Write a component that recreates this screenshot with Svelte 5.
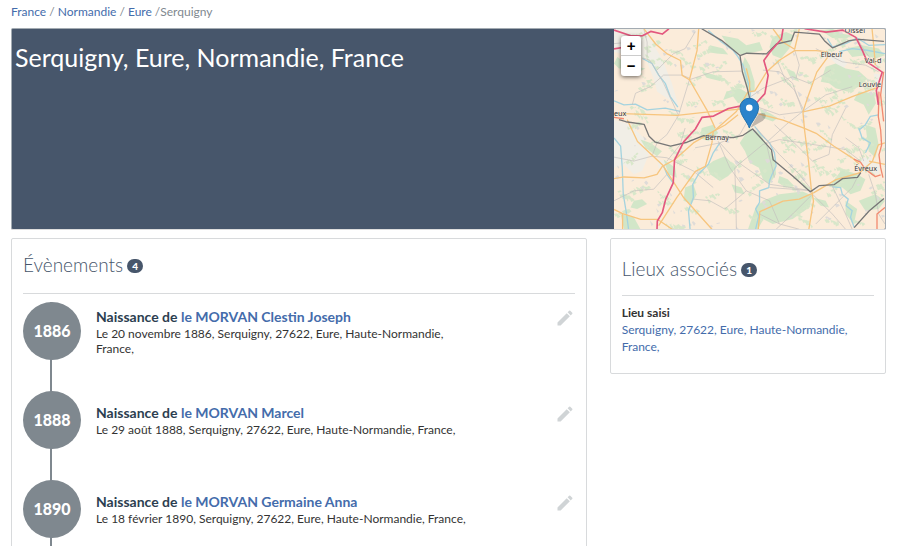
<script>
    const place = "Serquigny, 27622, Eure, Haute-Normandie, France,";

    const crumbs = ["France", "Normandie", "Eure"];

    const events = [
        { year: 1886, date: "Le 20 novembre 1886", person: "le MORVAN Clestin Joseph" },
        { year: 1888, date: "Le 29 août 1888", person: "le MORVAN Marcel" },
        { year: 1890, date: "Le 18 février 1890", person: "le MORVAN Germaine Anna" },
    ];

    // Map layers, drawn from bottom to top
    const forests = [
        "M410 300 438 312 462 350 486 395 490 440 470 470 450 455 438 420 410 405 396 370 380 345Z",
        "M640 115 670 105 700 120 740 128 765 150 740 175 705 190 670 180 650 165 625 160Z",
        "M450 520 500 500 570 492 600 505 590 540 540 575 480 590 440 570Z",
        "M480 25 520 10 545 20 530 60 505 90 480 80 470 55Z",
        "M325 20 375 30 400 50 440 40 450 65 420 72 385 78 350 60Z",
        "M300 400 335 385 350 400 370 420 345 445 320 460 290 440 280 415Z",
        "M690 425 735 440 760 455 745 490 715 500 690 480 650 478 670 450Z",
        "M395 85 410 110 425 160 425 190 408 195 395 150 388 110Z",
        "M740 190 785 195 792 225 770 260 755 230 725 215Z",
        "M10 85 30 100 55 98 70 115 95 120 80 128 45 118 15 120 0 105Z",
        "M700 60 750 50 800 60 819 80 790 90 760 80 720 85Z",
        "M625 5 660 0 690 15 720 20 700 30 660 28Z",
        "M380 180 405 195 405 215 375 225 360 205 330 215 340 190Z",
        "M440 240 470 255 495 270 480 280 450 270Z",
        "M760 290 790 300 800 350 790 390 770 370 765 330Z",
        "M500 445 525 455 545 475 520 480 495 465Z",
        "M60 520 85 515 100 530 70 545 50 540Z",
        "M290 50 330 60 345 78 310 75 280 70Z",
        "M265 130 300 138 335 150 320 158 280 148Z",
        "M215 480 240 470 250 500 235 530 210 520Z",
        "M430 535 455 520 460 560 435 606 405 606Z",
        "M600 510 640 520 650 540 625 535Z",
        "M700 520 735 545 725 590 700 560Z",
        "M80 335 110 345 145 370 130 385 95 360Z",
        "M150 395 185 420 190 450 165 440Z",
        "M520 120 545 130 560 160 535 150Z",
        "M20 560 60 570 80 606 30 606Z",
        "M355 470 385 480 395 500 365 495Z",
        "M265 300 300 290 315 315 285 340 260 330Z",
        "M740 520 790 500 819 520 800 545 760 550Z",
    ];

    const towns = [
        "M0 0H105L120 50 145 90 175 165 195 235 175 220 130 190 120 150 95 90 0 70Z",
        "M0 275 50 290 90 330 105 380 85 430 60 440 30 410 0 420Z",
        "M295 305 315 300 325 325 310 340 290 325Z",
        "M745 392 775 388 805 410 800 440 750 430Z",
        "M650 85 680 78 705 105 690 125 670 105Z",
        "M785 135 819 140 819 200 795 180Z",
        "M565 235 590 240 585 262 562 258Z",
        "M590 480 612 485 608 502 588 498Z",
        "M405 180 430 185 428 215 405 212Z",
        "M130 395 155 400 158 425 135 420Z",
    ];

    const rivers = [
        "M86 90 115 105 135 140 155 165 170 205 193 237",
        "M0 218 30 230 65 228 100 245 155 240 200 250",
        "M0 330 20 355 25 420 28 500 38 560 44 606",
        "M320 345 300 375 285 410 255 440 238 470 240 510 225 550 230 606",
        "M425 295 445 320 470 345 485 375 490 415 478 440 470 460 468 480 440 490 440 525 428 545 438 565 428 606",
        "M285 5 325 40 360 65 375 85 390 110 400 145 412 185 412 290",
        "M660 478 685 480 690 500 708 515 702 535 720 550 715 570 726 600",
        "M740 300 750 330 775 345 760 375",
        "M800 260 775 265 760 290 742 305",
        "M150 415 160 440 178 465",
        "M645 30 660 55 700 45 735 28 770 50 819 48",
        "M680 70 720 60 765 65 819 75",
    ];

    const lanes = [
        "M86 88 108 95 130 130 150 165 195 262 160 320 130 345 115 385",
        "M195 262 228 154 300 130 385 128",
        "M55 230 65 195 110 175 150 140 205 140 230 150",
        "M245 10 215 60 180 75 130 125",
        "M90 0 100 40 100 85",
        "M450 125 500 130 540 165 570 250",
        "M385 225 450 180 540 145 590 165 655 125",
        "M495 100 520 160 545 185 575 250 500 260 430 235",
        "M570 250 640 200 720 175",
        "M570 250 520 290 460 345 485 450",
        "M450 350 500 335 570 345 700 365 745 400",
        "M485 290 550 350 600 400 650 380 660 320 700 240",
        "M430 300 500 380 560 440 600 490",
        "M315 340 350 420 400 490 470 520 500 590",
        "M320 345 370 400 470 470 600 490",
        "M0 388 60 400 115 385 160 390 240 430 300 480",
        "M0 520 60 490 120 485 160 440",
        "M240 515 290 520 335 545 400 490",
        "M370 606 368 500 365 420 450 350",
        "M600 500 540 560 490 606",
        "M600 500 660 560 700 606",
        "M660 475 700 560 720 606",
        "M750 420 720 480 650 550 610 590",
        "M770 440 790 500 800 560 819 590",
        "M545 60 560 110 550 150",
        "M610 60 690 100 760 110 800 130",
        "M700 330 740 360 755 400",
        "M245 360 320 345 380 320 420 250",
        "M160 400 200 350 215 300",
        "M470 480 540 485 600 490",
        "M0 45 50 40 90 20",
        "M735 30 760 70 800 120",
        "M440 560 500 590 560 606",
    ];

    const roads = [
        "M91 1 126 46 161 76 201 96 206 141 228 154 281 246 306 301",
        "M256 0 251 66 228 154",
        "M0 256 191 262 300 250 381 243",
        "M306 306 370 250 405 191 426 188 461 131 500 95 546 66 611 66 646 70",
        "M400 120 410 160 410 190",
        "M481 1 510 40 546 62",
        "M546 62 556 20 560 0",
        "M646 86 613 131 586 206 571 251 576 306 588 401 596 481 603 521 589 606",
        "M571 251 651 234 720 205 801 176",
        "M431 256 511 276 576 301 611 316 665 355 721 391 741 409",
        "M603 496 671 456 741 436 781 401 799 351 819 345",
        "M603 496 560 515 511 521 441 553 436 606",
        "M40 275 71 341 146 411 211 511 296 606",
        "M0 453 30 448 91 451 130 440 146 416 183 396 240 345 300 310 336 291 375 260",
        "M135 595 190 510 246 431 276 416 296 345 300 310",
        "M0 546 26 559 81 576 131 576 176 606",
        "M26 559V606",
        "M780 0 785 50 790 110",
        "M771 400 819 410",
    ];

    const trunks = [
        "M801 190 799 266 806 306 809 351 801 381 806 420 813 450",
        "M725 394 745 403 760 425 790 447 806 442",
        "M819 540 795 560 795 606",
        "M0 268 30 272",
        "M815 130 806 200 815 280",
    ];

    const railways = [
        "M265 0 325 35 381 81 401 74 461 76 491 46 536 36 546 10 621 16 636 36 661 58 711 36 741 32 816 38",
        "M381 81 388 130 403 180 410 210V295",
        "M15 275 36 281 91 289 106 325 125 343 171 355 221 343 271 323 361 329 390 322 419 303 476 366 481 396 541 446 593 493 621 474 666 471 691 453 736 449 746 435",
        "M816 513 771 551 726 601",
    ];

    const motorways = [
        "M0 4 51 21 86 21 111 8 146 16 166 0",
        "M0 61 30 56",
        "M511 0 506 31 471 71 453 96 466 141 456 196 429 226",
        "M385 233 346 241 301 264 266 268 246 303 211 341 183 396 179 466 156 516 146 556 131 581 130 606",
        "M576 0 641 10 691 4 731 26 751 66 766 101 811 131 793 186 799 230",
    ];

    // Names at the sides are shortened to what fits in the view
    const labels = [
        { name: "Elbeuf", x: 625, y: 84 },
        { name: "Oissel", x: 697, y: 13 },
        { name: "Val-d", x: 757, y: 104 },
        { name: "Louvie", x: 740, y: 176 },
        { name: "eux", x: 0, y: 265 },
        { name: "Bernay", x: 275, y: 337 },
        { name: "Évreux", x: 726, y: 430 },
    ];

    // Small hedges and farms scattered over the fields
    const specks = [];
    let seed = 7;
    function next() {
        seed = (seed * 16807) % 2147483647;
        return seed / 2147483647;
    }
    function addSpeck(x, y, farm) {
        const w = 3 + Math.round(next() * 8);
        const h = 2 + Math.round(next() * 5);
        const lean = Math.round(next() * 12) - 6;
        specks.push({ path: `M${x} ${y}l${w} ${lean} ${h} ${h} ${-w} ${h}Z`, farm });
    }
    for (let i = 0; i < 110; i++) {
        const x = Math.round(next() * 819);
        const y = Math.round(next() * 606);
        const slope = next() * 2 - 1;
        // a hedge is a short chain of specks
        for (let j = 0; j < 7; j++) {
            addSpeck(Math.round(x + j * 6), Math.round(y + j * 6 * slope + next() * 8), false);
        }
    }
    for (let i = 0; i < 130; i++) {
        addSpeck(Math.round(next() * 819), Math.round(next() * 606), true);
    }
</script>

<nav class="breadcrumb" aria-label="Fil d'Ariane">
    {#each crumbs as crumb}<a href="#{crumb}">{crumb}</a>{" /"}{crumb === "Eure" ? "" : " "}{/each}Serquigny
</nav>

<main>
    <header class="banner">
        <h1>Serquigny, Eure, Normandie, France</h1>
        <div class="map">
            <svg class="tiles" viewBox="0 0 819 606" preserveAspectRatio="xMidYMid slice">
                {#each towns as d}<path class="town" {d} />{/each}
                {#each forests as d}<path class="forest" {d} />{/each}
                {#each specks as speck}<path class={speck.farm ? "farm" : "hedge"} d={speck.path} />{/each}
                {#each rivers as d}<path class="river" {d} />{/each}
                {#each lanes as d}<path class="lane" {d} />{/each}
                {#each roads as d}<path class="road" {d} />{/each}
                {#each trunks as d}<path class="trunk" {d} />{/each}
                {#each railways as d}<path class="railway" {d} />{/each}
                {#each motorways as d}<path class="motorway" {d} />{/each}
                {#each labels as label}<text x={label.x} y={label.y}>{label.name}</text>{/each}
                <path class="shadow" d="M412 300 430 268Q440 250 456 256 464 266 450 278Z" />
                <path
                    class="pin"
                    d="M409 300C404 282 381 262 381 238A28 28 0 0 1 437 238C437 262 414 282 409 300Z"
                />
                <circle cx="409" cy="239" r="10" fill="#fff" />
            </svg>
            <div class="zoom">
                <button aria-label="Zoom avant">+</button>
                <button aria-label="Zoom arrière">−</button>
            </div>
        </div>
    </header>

    <div class="columns">
        <section class="card events">
            <h2>Évènements <span class="badge">4</span></h2>
            <ol class="timeline">
                {#each events as event}
                    <li>
                        <div class="rail"><span class="year">{event.year}</span></div>
                        <div class="entry">
                            <div class="details">
                                <h3>Naissance de <a href="#{event.year}">{event.person}</a></h3>
                                <p>{event.date}, {place}</p>
                            </div>
                            <button class="edit" aria-label="Modifier">
                                <svg viewBox="0 0 24 24" width="20" height="20">
                                    <path
                                        d="M3 17.250V21h3.750L17.810 9.940l-3.750-3.750L3 17.250zM20.710 7.040a1 1 0 0 0 0-1.410l-2.340-2.340a1 1 0 0 0-1.410 0l-1.830 1.830 3.750 3.750 1.830-1.830z"
                                    />
                                </svg>
                            </button>
                        </div>
                    </li>
                {/each}
            </ol>
        </section>

        <aside class="card places">
            <h2>Lieux associés <span class="badge">1</span></h2>
            <strong>Lieu saisi</strong>
            <a href="#lieu">{place}</a>
        </aside>
    </div>
</main>

<style>
    :global(body) {
        margin: 0;
        background: #fff;
        color: #333;
        font-family: Lato, "Liberation Sans", sans-serif;
        font-size: 12px;
        line-height: 17px;
    }

    a {
        color: #446cab;
        text-decoration: none;
    }

    button {
        border: none;
        padding: 0;
        cursor: pointer;
    }

    .breadcrumb {
        padding: 0 11px;
        line-height: 24px;
        margin-bottom: 4px;
        color: #7f888f;
    }

    main {
        padding: 0 14px 0 11px;
    }

    .banner {
        display: grid;
        grid-template-columns: 20fr 9fr;
        border: 1px solid #a3abb2;
        border-bottom-color: #ddd;
        border-radius: 2px;
        background: #47566b;
        overflow: hidden;
    }

    h1 {
        margin: 0;
        padding: 12px 3px;
        color: #fff;
        font-size: 25px;
        font-weight: 400;
        line-height: 32px;
    }

    .map {
        position: relative;
        height: 200px;
        background: #fbecda;
        overflow: hidden;
    }

    .tiles {
        display: block;
        width: 100%;
        height: 100%;
        fill: none;
        stroke-linejoin: round;
    }

    .forest {
        fill: #d2e6c8;
    }

    .hedge {
        fill: #d8e7ca;
    }

    .town {
        fill: #f1eee6;
    }

    .farm {
        fill: #dedbd8;
    }

    .river {
        stroke: #a5d3df;
        stroke-width: 4;
    }

    .lane {
        stroke: #c2bfbe;
        stroke-width: 2;
    }

    .road {
        stroke: #f7c57e;
        stroke-width: 4;
    }

    .trunk {
        stroke: #f28a70;
        stroke-width: 4;
    }

    .railway {
        stroke: #777;
        stroke-width: 4;
    }

    .motorway {
        stroke: #e3587f;
        stroke-width: 5;
    }

    text {
        fill: #333;
        stroke: #fbf3ea;
        stroke-width: 2;
        paint-order: stroke;
        font-family: "Noto Sans", sans-serif;
        font-size: 22px;
    }

    .shadow {
        fill: #555;
        opacity: 0.35;
    }

    .pin {
        fill: #2b83cb;
        stroke: #2171ad;
        stroke-width: 3;
    }

    .zoom {
        position: absolute;
        top: 7px;
        left: 7px;
        width: 20px;
        border-radius: 3px;
        background: #fff;
        box-shadow: 0 1px 4px rgba(0, 0, 0, 0.6);
    }

    .zoom button {
        display: block;
        width: 100%;
        height: 20px;
        background: none;
        color: #000;
        font: bold 15px/20px "Liberation Sans", sans-serif;
    }

    .zoom button:first-child {
        border-bottom: 1px solid #ccc;
    }

    .columns {
        display: grid;
        grid-template-columns: 25fr 12fr;
        align-items: start;
        gap: 23px;
        margin-top: 8px;
    }

    .card {
        border: 1px solid #d8dadc;
        border-radius: 2px;
        padding: 0 11px;
    }

    h2 {
        display: flex;
        align-items: center;
        gap: 4px;
        margin: 0 0 8px;
        border-bottom: 1px solid #d8dadc;
        padding-bottom: 2px;
        color: #47566b;
        font-size: 19px;
        font-weight: 300;
        line-height: 52px;
    }

    .places {
        padding-bottom: 18px;
    }

    .places h2 {
        padding: 4px 0 0;
    }

    .places strong,
    .places a {
        display: block;
    }

    .badge {
        min-width: 16px;
        margin-top: 2px;
        border-radius: 7px;
        background: #47566b;
        color: #fff;
        font-size: 10px;
        font-weight: 900;
        line-height: 14px;
        text-align: center;
    }

    .timeline {
        margin: 0;
        padding: 0;
        list-style: none;
    }

    .timeline li {
        display: flex;
        gap: 15px;
        min-height: 89px;
    }

    .rail {
        flex: none;
        width: 58px;
        background: linear-gradient(#7f888f, #7f888f) 27px 0 / 2px 100% no-repeat;
    }

    .year {
        display: block;
        border-radius: 50%;
        background: #7f888f;
        color: #fff;
        font-size: 16px;
        font-weight: 900;
        line-height: 58px;
        text-align: center;
    }

    /* centred on the year disc */
    .entry {
        flex: 1;
        align-self: flex-start;
        display: grid;
        grid-template-columns: 1fr auto;
        align-content: center;
        min-height: 58px;
    }

    .details {
        max-width: 380px;
    }

    h3 {
        margin: 0;
        color: #2c3e50;
        font-size: 14px;
        font-weight: 700;
        line-height: 19px;
    }

    .details p {
        margin: 0;
        line-height: 15px;
    }

    .edit {
        align-self: start;
        margin-top: 1px;
        background: none;
        fill: #d0d4d6;
    }

    .edit svg {
        display: block;
    }
</style>
